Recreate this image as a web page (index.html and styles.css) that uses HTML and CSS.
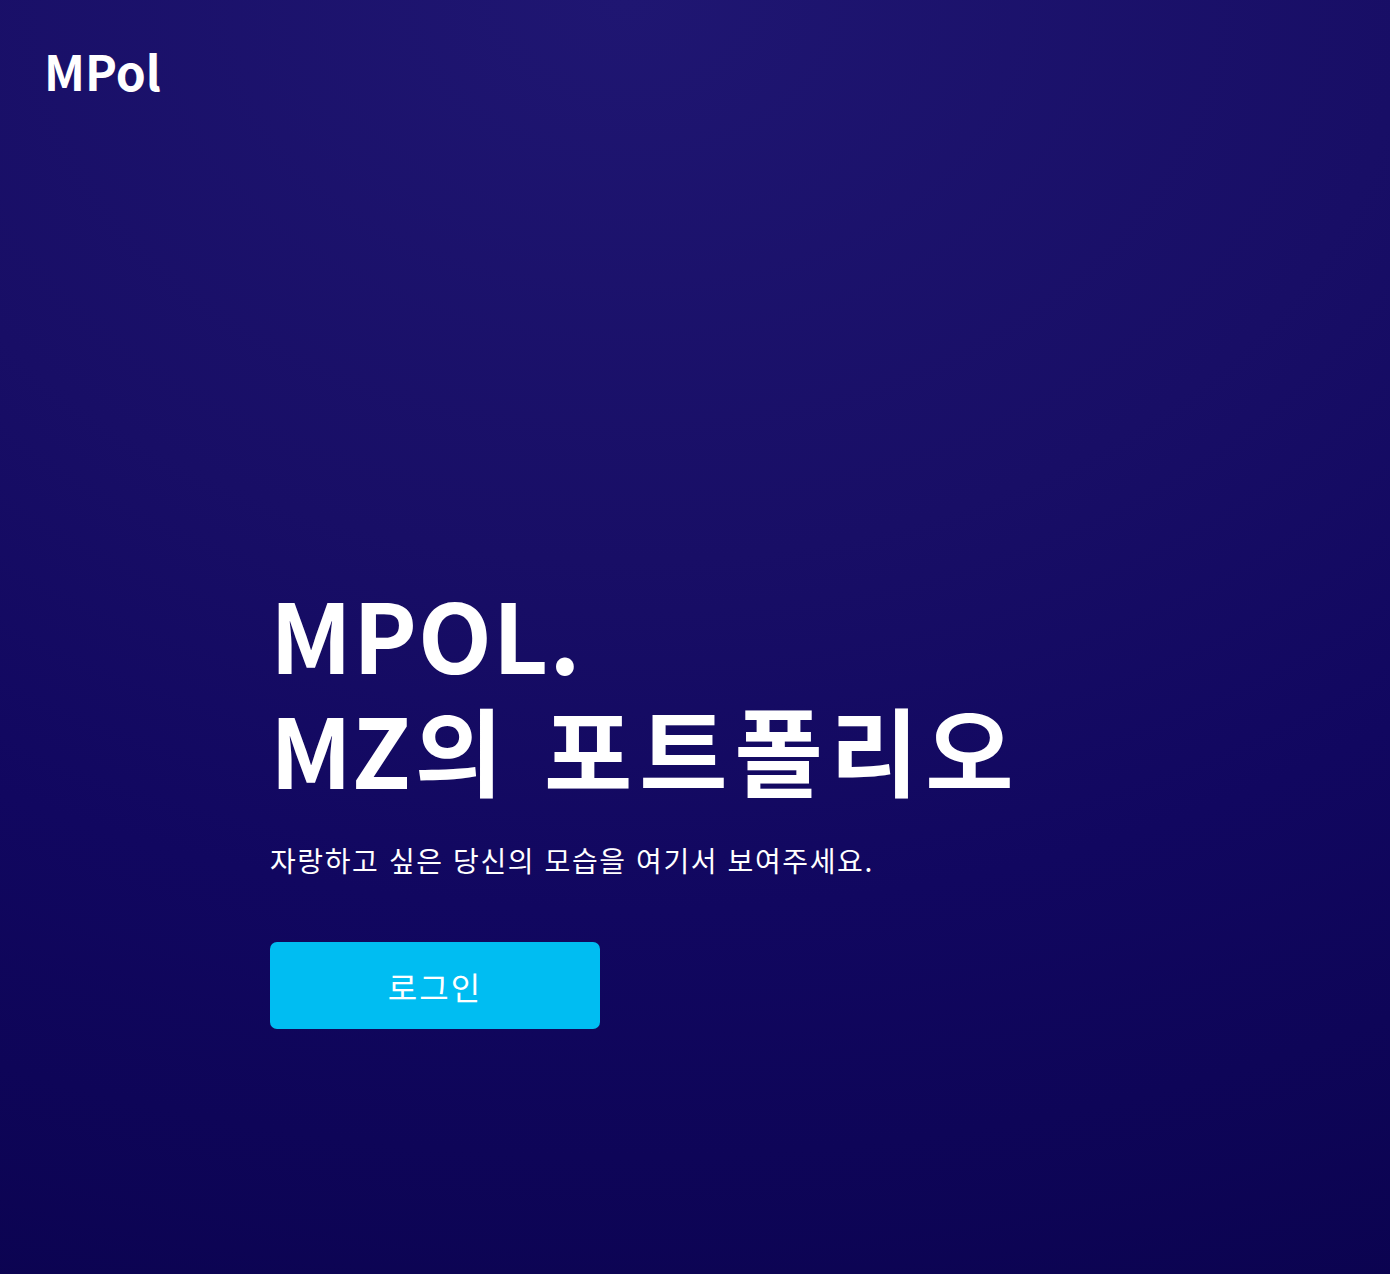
FILE: index.html
```html
<!DOCTYPE html>
<html lang="ko">
<head>
<meta charset="utf-8">
<title>MPol</title>
<link rel="stylesheet" href="styles.css">
</head>
<body>
<div class="page">
  <header class="header">
    <div class="logo">MPol</div>
  </header>
  <main class="hero">
    <h1 class="title"><span class="title-en">MPOL.</span><br>MZ<span class="title-ko">의 포트폴리오</span></h1>
    <p class="subtitle">자랑하고 싶은 당신의 모습을 여기서 보여주세요.</p>
    <button class="login">로그인</button>
  </main>
</div>
</body>
</html>
```
FILE: styles.css
```css
html, body {
  margin: 0;
  padding: 0;
  height: 100%;
}
body {
  font-family: "Noto Sans CJK KR", "Noto Sans", sans-serif;
  color: #ffffff;
  background: radial-gradient(ellipse 140% 110% at 45% 0%, #1f1672 0%, #180e66 40%, #110760 65%, #0b0350 100%);
  min-height: 1274px;
}
.page {
  display: flex;
  flex-direction: column;
  min-height: 1274px;
}
.header {
  padding: 40px 0 0 44px;
}
.logo {
  font-size: 48px;
  font-weight: 700;
  line-height: 60px;
}
.hero {
  padding: 475px 0 0 270px;
}
.title {
  margin: 0;
  font-size: 96px;
  font-weight: 700;
  line-height: 115px;
}
.title-en {
  letter-spacing: 1px;
}
.title-ko {
  letter-spacing: 7px;
  margin-left: 4px;
}
.subtitle {
  margin: 35px 0 0 0;
  font-size: 28px;
  font-weight: 400;
  line-height: 40px;
  letter-spacing: 1.6px;
}
.login {
  margin-top: 62px;
  width: 330px;
  height: 87px;
  border: none;
  border-radius: 7px;
  background: #00bdf2;
  color: #ffffff;
  font-family: "Noto Sans CJK KR", "Noto Sans", sans-serif;
  font-size: 32px;
  font-weight: 400;
  letter-spacing: 2px;
  cursor: pointer;
}
```
